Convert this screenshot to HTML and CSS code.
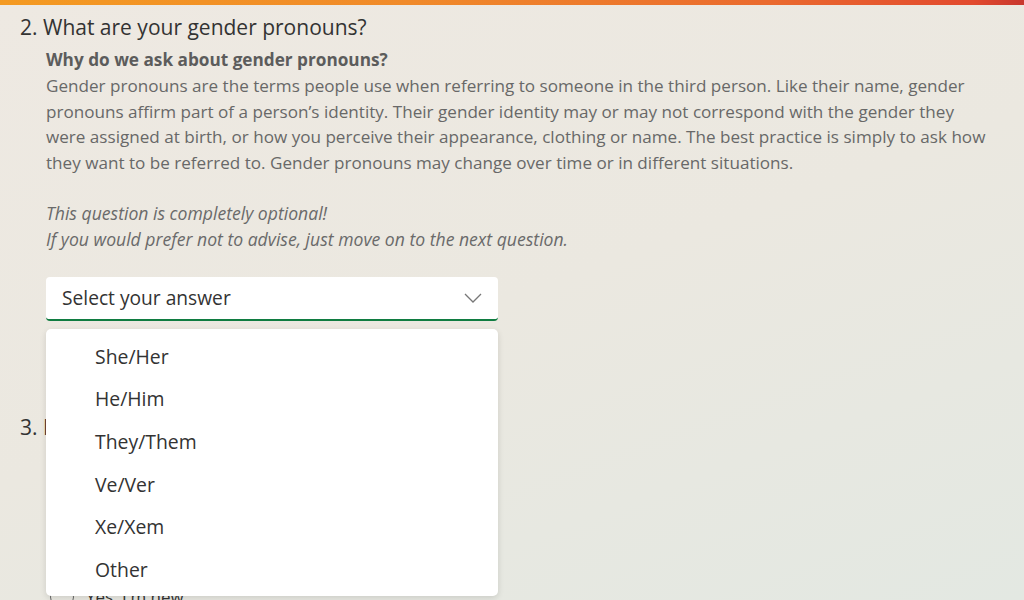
FILE: index.html
```html
<!DOCTYPE html>
<html lang="en">
<head>
<meta charset="utf-8">
<title>Gender pronouns</title>
<link rel="stylesheet" href="styles.css">
</head>
<body>
<div class="topbar"></div>
<main class="content">
  <section class="question">
    <h2 class="q-title"><span class="q-num">2.</span> What are your gender pronouns?</h2>
    <div class="q-body">
      <p class="why">Why do we ask about gender pronouns?</p>
      <p class="desc">Gender pronouns are the terms people use when referring to someone in the third person. Like their name, gender pronouns affirm part of a person’s identity. Their gender identity may or may not correspond with the gender they were assigned at birth, or how you perceive their appearance, clothing or name. The best practice is simply to ask how they want to be referred to. Gender pronouns may change over time or in different situations.</p>
      <p class="note">This question is completely optional!<br>If you would prefer not to advise, just move on to the next question.</p>
      <div class="select-wrap">
        <div class="select">
          <span class="select-text">Select your answer</span>
          <svg class="chev" width="18" height="10" viewBox="0 0 18 10"><path d="M1 1 L9 9 L17 1" fill="none" stroke="#777" stroke-width="1.3"/></svg>
        </div>
        <ul class="menu">
          <li>She/Her</li>
          <li>He/Him</li>
          <li>They/Them</li>
          <li>Ve/Ver</li>
          <li>Xe/Xem</li>
          <li>Other</li>
        </ul>
      </div>
    </div>
  </section>
  <section class="question q3">
    <h2 class="q-title"><span class="q-num">3.</span> Is this your first time?</h2>
    <div class="q-body">
      <p class="q3-sub">Select one option</p>
      <div class="radio-row"><span class="radio"></span><span class="radio-label">Yes, I'm new</span></div>
    </div>
  </section>
</main>
</body>
</html>
```
FILE: styles.css
```css
html, body {
  margin: 0;
  height: 100%;
}
body {
  background: linear-gradient(160deg, #eee9e2 0%, #ebe8e0 50%, #e3e8e2 100%);
  font-family: "Open Sans", "Noto Sans", sans-serif;
  color: #333;
  overflow: hidden;
}
.topbar {
  height: 5px;
  background: linear-gradient(90deg, #f49a22 0%, #f08a2a 40%, #ea6a2e 75%, #e24a2e 95%, #c8372e 100%);
}
.content {
  padding: 8px 20px 0 20px;
}
.q-title {
  margin: 0;
  font-weight: 400;
  font-size: 21px;
  line-height: 28px;
  color: #333;
}
.q-body {
  padding-left: 26px;
}
.why {
  margin: 7px 0 0 0;
  font-weight: 700;
  font-size: 17.2px;
  line-height: 24px;
  color: #5c5c5c;
}
.desc {
  margin: 1px 0 0 0;
  font-size: 17.1px;
  line-height: 25.7px;
  color: #686868;
  padding-right: 12px;
}
.note {
  margin: 24px 0 0 0;
  font-style: italic;
  font-size: 17.6px;
  line-height: 26.5px;
  color: #6a6a6a;
}
.select-wrap {
  position: relative;
  width: 452px;
  margin-top: 24px;
  z-index: 5;
}
.select {
  height: 42px;
  background: #fff;
  border-radius: 4px;
  border-bottom: 2px solid #107c41;
  display: flex;
  align-items: center;
  justify-content: space-between;
  padding: 0 16px;
  box-sizing: content-box;
  width: 420px;
}
.select-text {
  font-size: 19.2px;
  color: #333;
}
.menu {
  position: absolute;
  left: 0;
  top: 52px;
  width: 452px;
  margin: 0;
  padding: 7px 0 5px 0;
  list-style: none;
  background: #fff;
  border-radius: 5px;
  box-shadow: 0 2px 6px rgba(0,0,0,0.12);
  box-sizing: border-box;
}
.menu li {
  height: 42.6px;
  line-height: 42.6px;
  padding-left: 49px;
  font-size: 19.4px;
  color: #333;
}
.q3 {
  margin-top: 92px;
}
.q3-sub {
  margin: 10px 0 0 0;
  font-size: 16px;
  line-height: 24px;
  color: #666;
}
.radio-row {
  display: flex;
  align-items: center;
  gap: 12px;
  margin-top: 110px;
  margin-left: 4px;
}
.radio {
  width: 22px;
  height: 22px;
  border: 1.5px solid #666;
  border-radius: 50%;
}
.radio-label {
  font-size: 17px;
  color: #333;
}
```
